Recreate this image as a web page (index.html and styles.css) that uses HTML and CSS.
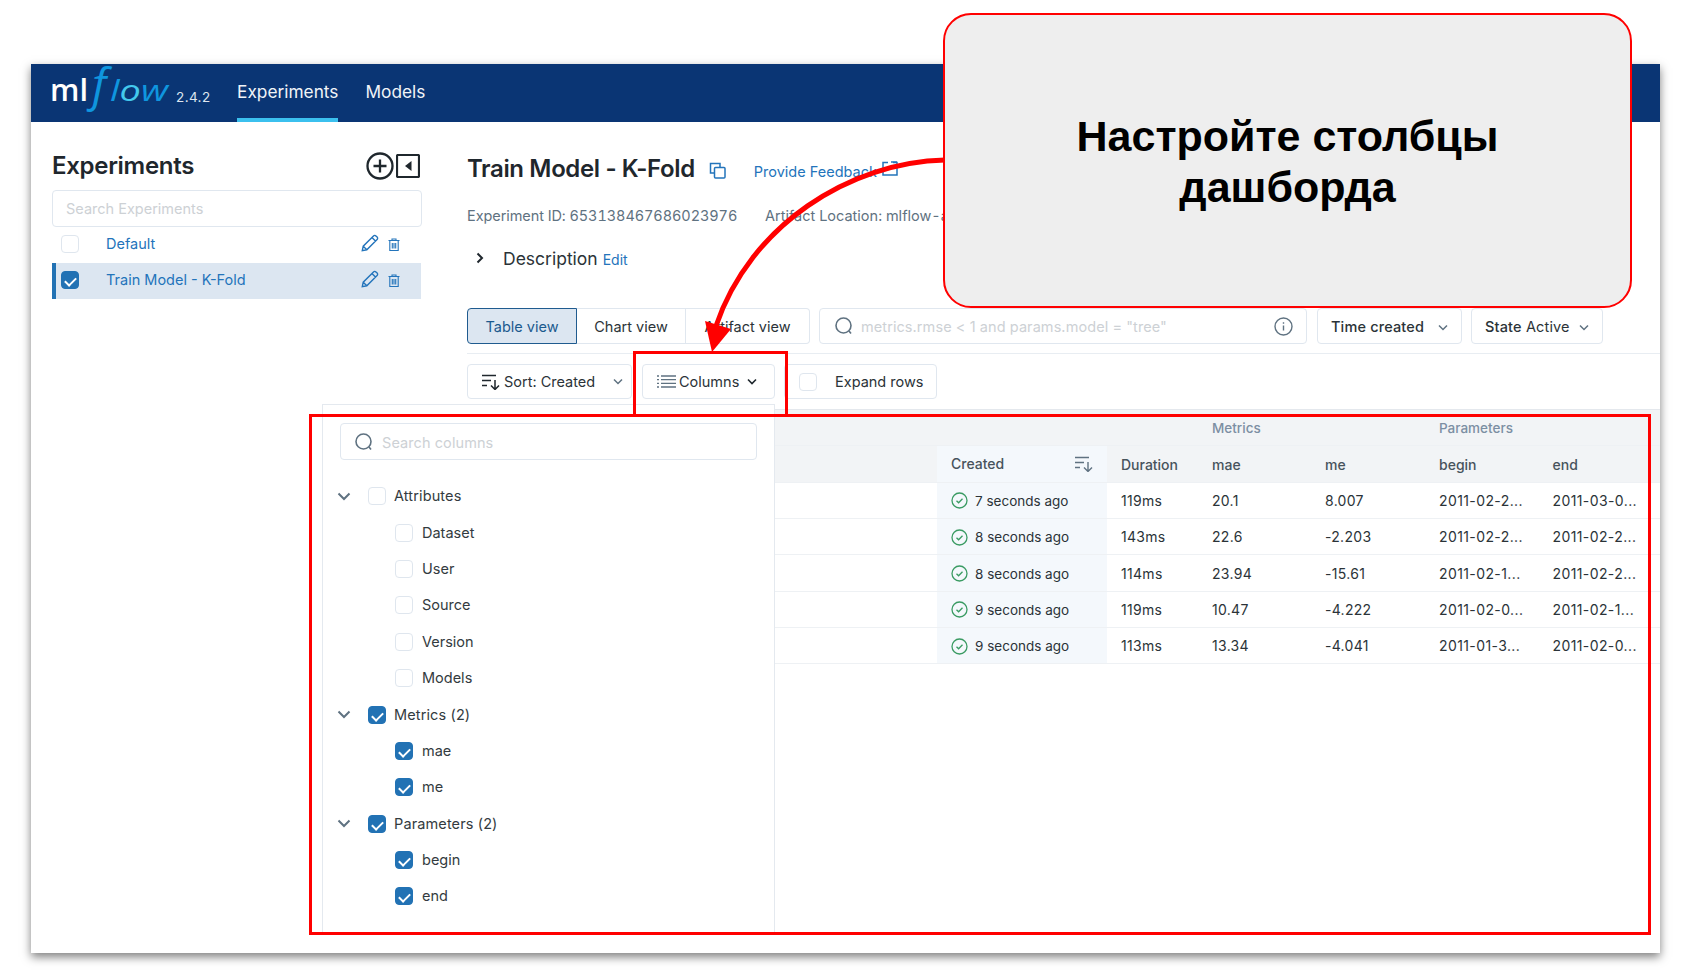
FILE: index.html
```html
<!DOCTYPE html>
<html lang="ru">
<head>
<meta charset="utf-8">
<title>MLflow</title>
<link rel="stylesheet" href="styles.css">
</head>
<body>
<div class="window">
  <header class="nav">
    <svg class="logo" width="122" height="58" viewBox="0 0 122 58">
      <text class="logo-ml" x="0" y="36.500" textLength="38" lengthAdjust="spacingAndGlyphs">ml</text>
      <text class="logo-f" x="42" y="36.500">f</text>
      <text class="logo-low" x="60" y="36.500" textLength="58" lengthAdjust="spacingAndGlyphs">l<tspan class="logo-o">o</tspan>w</text>
    </svg>
    <span class="version">2.4.2</span>
    <a class="nav-link nav-active">Experiments</a>
    <a class="nav-link">Models</a>
  </header>
  <div class="body">
    <aside class="sidebar">
      <div class="side-head">
        <h2 class="side-title">Experiments</h2>
        <div class="side-tools">
          <svg width="28" height="28" viewBox="0 0 28 28" fill="none" stroke="#1f272d" stroke-width="2.300"><circle cx="14" cy="14" r="12.500"/><path d="M14 7.500v13M7.500 14h13"/></svg>
          <svg width="24" height="24" viewBox="0 0 24 24" fill="none" stroke="#1f272d" stroke-width="2.200"><rect x="1" y="1" width="22" height="22" rx="1"/><path d="M15.500 7v10L9 12z" fill="#1f272d" stroke="none"/></svg>
        </div>
      </div>
      <div class="side-search">Search Experiments</div>
      <div class="exp-row">
        <span class="cb"></span><span class="exp-name">Default</span>
        <svg class="pencil" width="18" height="18" viewBox="0 0 17 17" fill="none" stroke="#2374bb" stroke-width="1.300"><path d="M1.200 15.800l.9-4.300L11.800 1.800a1.600 1.600 0 0 1 2.300 0l1.100 1.100a1.600 1.600 0 0 1 0 2.300L5.500 14.900zM2.100 11.500l3.400 3.400M10.300 3.300l3.400 3.400"/></svg>
        <svg class="trash" width="12" height="13" viewBox="0 0 12 13" fill="none" stroke="#2374bb" stroke-width="1.100"><path d="M.5 2.500h11M4 2.500V1h4v1.500M1.800 2.500h8.400v10H1.800zM4.300 5v5.500M6 5v5.500M7.700 5v5.500"/></svg>
      </div>
      <div class="exp-row exp-active">
        <span class="cb cb-on"></span><span class="exp-name">Train Model - K-Fold</span>
        <svg class="pencil" width="18" height="18" viewBox="0 0 17 17" fill="none" stroke="#2374bb" stroke-width="1.300"><path d="M1.200 15.800l.9-4.300L11.800 1.800a1.600 1.600 0 0 1 2.300 0l1.100 1.100a1.600 1.600 0 0 1 0 2.300L5.500 14.900zM2.100 11.500l3.400 3.400M10.300 3.300l3.400 3.400"/></svg>
        <svg class="trash" width="12" height="13" viewBox="0 0 12 13" fill="none" stroke="#2374bb" stroke-width="1.100"><path d="M.5 2.500h11M4 2.500V1h4v1.500M1.800 2.500h8.400v10H1.800zM4.300 5v5.500M6 5v5.500M7.700 5v5.500"/></svg>
      </div>
    </aside>
    <main class="main">
      <div class="title-row">
        <h1 class="title">Train Model - K-Fold</h1>
        <svg class="copy" width="17" height="17" viewBox="0 0 17 17" fill="none" stroke="#2374bb" stroke-width="1.500"><path d="M11 5V1.500H1.500V11H5"/><rect x="5.500" y="5.500" width="10.500" height="10.500" rx="1"/></svg>
        <a class="link feedback">Provide Feedback</a>
        <svg class="ext" width="16" height="15" viewBox="0 0 16 15" fill="none" stroke="#2374bb" stroke-width="1.500"><path d="M6 1.500H1v12.500h14V1.500h-4"/><path d="M9 1h6"/></svg>
      </div>
      <div class="meta-row"><span class="meta-id">Experiment ID: 653138467686023976</span><span>Artifact Location: mlflow-artifacts:/653138467686023976</span></div>
      <div class="desc-row">
        <svg class="desc-chev" width="10" height="12" viewBox="0 0 10 12" fill="none" stroke="#1f272d" stroke-width="2"><path d="M2.500 1.500L7 6l-4.500 4.500"/></svg>
        <span class="desc">Description</span><a class="link edit">Edit</a>
      </div>
      <div class="toolbar">
        <div class="tabs">
          <span class="tab tab-on tab-table">Table view</span>
          <span class="tab tab-chart">Chart view</span>
          <span class="tab tab-art">Artifact view</span>
        </div>
        <div class="run-search">
          <svg width="20" height="20" viewBox="0 0 20 20" fill="none" stroke="#5f7281" stroke-width="1.600"><circle cx="9.500" cy="9.500" r="7.500"/><path d="M15 15l2 2.500"/></svg>
          <span class="ph">metrics.rmse &lt; 1 and params.model = "tree"</span>
          <svg class="info" width="19" height="19" viewBox="0 0 19 19" fill="none" stroke="#5f7281" stroke-width="1.400"><circle cx="9.500" cy="9.500" r="8.500"/><path d="M9.500 8.500v5M9.500 5.200v1.500"/></svg>
        </div>
        <div class="btn btn-time"><b>Time created</b><svg class="chev" width="10" height="7" viewBox="0 0 10 7" fill="none" stroke="#5f7281" stroke-width="1.500"><path d="M1 1.500l4 4 4-4"/></svg></div>
        <div class="btn btn-state"><b>State</b>&nbsp;Active<svg class="chev" width="10" height="7" viewBox="0 0 10 7" fill="none" stroke="#5f7281" stroke-width="1.500"><path d="M1 1.500l4 4 4-4"/></svg></div>
      </div>
      <div class="toolbar2">
        <div class="btn btn-sort">
          <svg width="18" height="16" viewBox="0 0 18 16" fill="none" stroke="#1f272d" stroke-width="1.500"><path d="M0 1.500h14M0 6.500h9M0 11.500h5M13 6v9M9 11.500l4 4 4-4"/></svg>
          <span>Sort: Created</span>
          <svg class="chev" width="10" height="7" viewBox="0 0 10 7" fill="none" stroke="#5f7281" stroke-width="1.500"><path d="M1 1.500l4 4 4-4"/></svg>
        </div>
        <div class="btn btn-cols">
          <svg width="19" height="14" viewBox="0 0 19 14" fill="none" stroke="#5f7281" stroke-width="1.300"><path d="M4 1h15M4 4.700h15M4 8.300h15M4 12h15M0 1h2M0 4.700h2M0 8.300h2M0 12h2"/></svg>
          <span>Columns</span>
          <svg class="chev" width="10" height="7" viewBox="0 0 10 7" fill="none" stroke="#1f272d" stroke-width="1.600"><path d="M1 1.500l4 4 4-4"/></svg>
        </div>
        <div class="btn btn-expand"><span class="cb"></span><span>Expand rows</span></div>
      </div>
      <div class="table">
        <div class="tr th th-group"><span></span><span></span><span></span><span class="group">Metrics</span><span></span><span class="group">Parameters</span><span></span></div>
        <div class="tr th"><span></span><span class="td-created th-created">Created<svg width="18" height="16" viewBox="0 0 18 16" fill="none" stroke="#5f7281" stroke-width="1.400"><path d="M0 1.500h14M0 6.500h9M0 11.500h5M13 6v9M9 11.500l4 4 4-4"/></svg></span><span>Duration</span><span>mae</span><span>me</span><span>begin</span><span>end</span></div>
        <div class="tr"><span></span><span class="td-created"><svg class="ok" width="17" height="17" viewBox="0 0 17 17" fill="none" stroke="#3a9b63" stroke-width="1.300"><circle cx="8.500" cy="8.500" r="7.500"/><path d="M5.500 8.700l2.100 2.100 3.900-4"/></svg>7 seconds ago</span><span>119ms</span><span>20.1</span><span>8.007</span><span>2011-02-2...</span><span>2011-03-0...</span></div>
        <div class="tr"><span></span><span class="td-created"><svg class="ok" width="17" height="17" viewBox="0 0 17 17" fill="none" stroke="#3a9b63" stroke-width="1.300"><circle cx="8.500" cy="8.500" r="7.500"/><path d="M5.500 8.700l2.100 2.100 3.900-4"/></svg>8 seconds ago</span><span>143ms</span><span>22.6</span><span>-2.203</span><span>2011-02-2...</span><span>2011-02-2...</span></div>
        <div class="tr"><span></span><span class="td-created"><svg class="ok" width="17" height="17" viewBox="0 0 17 17" fill="none" stroke="#3a9b63" stroke-width="1.300"><circle cx="8.500" cy="8.500" r="7.500"/><path d="M5.500 8.700l2.100 2.100 3.900-4"/></svg>8 seconds ago</span><span>114ms</span><span>23.94</span><span>-15.61</span><span>2011-02-1...</span><span>2011-02-2...</span></div>
        <div class="tr"><span></span><span class="td-created"><svg class="ok" width="17" height="17" viewBox="0 0 17 17" fill="none" stroke="#3a9b63" stroke-width="1.300"><circle cx="8.500" cy="8.500" r="7.500"/><path d="M5.500 8.700l2.100 2.100 3.900-4"/></svg>9 seconds ago</span><span>119ms</span><span>10.47</span><span>-4.222</span><span>2011-02-0...</span><span>2011-02-1...</span></div>
        <div class="tr"><span></span><span class="td-created"><svg class="ok" width="17" height="17" viewBox="0 0 17 17" fill="none" stroke="#3a9b63" stroke-width="1.300"><circle cx="8.500" cy="8.500" r="7.500"/><path d="M5.500 8.700l2.100 2.100 3.900-4"/></svg>9 seconds ago</span><span>113ms</span><span>13.34</span><span>-4.041</span><span>2011-01-3...</span><span>2011-02-0...</span></div>
      </div>
    </main>
  </div>
  <div class="dropdown">
    <div class="col-search">
      <svg width="20" height="20" viewBox="0 0 20 20" fill="none" stroke="#5f7281" stroke-width="1.600"><circle cx="9.500" cy="9.500" r="7.500"/><path d="M15 15l2 2.500"/></svg>
      <span class="ph">Search columns</span>
    </div>
    <div class="tree">
      <div class="node parent"><svg class="tchev" width="14" height="9" viewBox="0 0 14 9" fill="none" stroke="#5f7281" stroke-width="2"><path d="M1.500 1.500L7 7l5.500-5.500"/></svg><span class="cb"></span><span>Attributes</span></div>
      <div class="node child"><span class="cb"></span><span>Dataset</span></div>
      <div class="node child"><span class="cb"></span><span>User</span></div>
      <div class="node child"><span class="cb"></span><span>Source</span></div>
      <div class="node child"><span class="cb"></span><span>Version</span></div>
      <div class="node child"><span class="cb"></span><span>Models</span></div>
      <div class="node parent"><svg class="tchev" width="14" height="9" viewBox="0 0 14 9" fill="none" stroke="#5f7281" stroke-width="2"><path d="M1.500 1.500L7 7l5.500-5.500"/></svg><span class="cb cb-on"></span><span>Metrics (2)</span></div>
      <div class="node child"><span class="cb cb-on"></span><span>mae</span></div>
      <div class="node child"><span class="cb cb-on"></span><span>me</span></div>
      <div class="node parent"><svg class="tchev" width="14" height="9" viewBox="0 0 14 9" fill="none" stroke="#5f7281" stroke-width="2"><path d="M1.500 1.500L7 7l5.500-5.500"/></svg><span class="cb cb-on"></span><span>Parameters (2)</span></div>
      <div class="node child"><span class="cb cb-on"></span><span>begin</span></div>
      <div class="node child"><span class="cb cb-on"></span><span>end</span></div>
    </div>
  </div>
</div>
<div class="mark mark-cols"></div>
<div class="mark mark-panel"></div>
<svg class="arrow" width="1682" height="974" viewBox="0 0 1682 974" fill="none">
  <path d="M945 160C850 162 750 225 716 326" stroke="#f00" stroke-width="5"/>
  <path d="M705 321L731 329L712 352z" fill="#f00"/>
</svg>
<div class="callout">Настройте столбцы<br>дашборда</div>
</body>
</html>
```
FILE: styles.css
```css
* { box-sizing: border-box; }
html, body { margin: 0; padding: 0; }
body {
  position: relative;
  width: 1682px;
  height: 974px;
  overflow: hidden;
  padding: 64px 0 0 31px;
  background: #fff;
  color: #2b3338;
  font: 14px/20px Inter, "Liberation Sans", sans-serif;
}
h1, h2 { margin: 0; }
a { cursor: pointer; }
svg { display: block; flex: none; }

.window {
  position: relative;
  width: 1629px;
  height: 889px;
  background: #fff;
  box-shadow: 0 4px 9px rgba(0, 0, 0, .5);
}

/* top bar */
.nav {
  display: flex;
  align-items: stretch;
  height: 58px;
  background: #0a3574;
  color: #fff;
  padding-left: 19px;
}
.logo { overflow: visible; }
.logo-ml { font: 600 30px "Open Sans", sans-serif; fill: #fff; }
.logo-f { font: italic 500 46px "Open Sans", sans-serif; fill: #0f96df; }
.logo-low { font: italic 500 29px "Open Sans", sans-serif; fill: #0f96df; }
.logo-o { fill: #43c9ed; }
.version { align-self: flex-end; margin: 0 0 15px 4px; width: 61px; font-size: 13.500px; color: #dfe6ef; letter-spacing: .4px; }
.nav-link { display: flex; align-items: center; font-size: 17.300px; color: #f1f4f8; margin-right: 27px; border-bottom: 4px solid transparent; padding-top: 1px; }
.nav-active { border-bottom-color: #3bc0ee; }

.body { display: flex; height: 831px; }

/* sidebar */
.sidebar { width: 436px; flex: none; padding: 29px 0 0 21px; }
.side-head { display: flex; align-items: center; justify-content: space-between; width: 368px; height: 30px; }
.side-title { font-size: 24px; font-weight: 600; line-height: 30px; color: #1f272d; letter-spacing: -.3px; }
.side-tools { display: flex; align-items: center; gap: 2px; }
.side-search {
  width: 370px; height: 37px; margin-top: 9px; padding: 8px 13px;
  border: 1px solid #e0e7ef; border-radius: 4px;
  color: #cdd1d5; font-size: 14.500px;
}
.exp-row { display: flex; align-items: center; width: 369px; height: 36px; padding: 0 21px 2px 5px; border-left: 4px solid transparent; }
.exp-name { margin-left: 27px; color: #2374bb; font-size: 14.500px; }
.exp-row .pencil { margin: 0 0 3px auto; }
.exp-row .trash { margin-left: 9px; }
.exp-active { background: #dce6f1; border-left-color: #2272b4; }

/* checkbox */
.cb { display: block; flex: none; position: relative; width: 18px; height: 18px; background: #fff; border: 1px solid #dfe6ee; border-radius: 4px; }
.cb-on { background: #2272b4; border-color: #2272b4; }
.cb-on::after {
  content: ""; position: absolute; left: 5px; top: 3px; width: 5px; height: 9px;
  border: solid #fff; border-width: 0 2px 2px 0; transform: rotate(45deg);
}

/* main */
.main { width: 1193px; flex: none; padding-top: 28px; }
.link { color: #2374bb; }
.title-row { display: flex; align-items: center; height: 36px; }
.title { font-size: 24px; font-weight: 600; line-height: 36px; color: #1f272d; letter-spacing: -.37px; padding-top: 1px; }
.copy { margin: 4px 0 0 14px; }
.feedback { margin: 7px 0 0 28px; font-size: 14.500px; }
.ext { margin: 0 0 0 5px; }
.meta-row { display: flex; height: 22px; margin-top: 19px; line-height: 22px; color: #5f7281; font-size: 14.500px; white-space: nowrap; font-variant-numeric: tabular-nums; }
.meta-id { width: 298px; letter-spacing: -.08px; }
.desc-row { display: flex; align-items: center; height: 26px; margin-top: 18px; padding-left: 8px; }
.desc-chev { margin-right: 18px; }
.desc { font-size: 17.500px; color: #2b3338; padding-top: 1px; }
.edit { margin: 3px 0 0 5px; font-size: 14px; }

.toolbar { display: flex; height: 46px; padding-bottom: 9px; margin-top: 37px; border-bottom: 1px solid #e8edf2; white-space: nowrap; }
.tabs { display: flex; width: 343px; }
.tab { display: flex; align-items: center; justify-content: center; padding-top: 2px; border: 1px solid #e0e7ef; font-size: 14.500px; }
.tab-table { width: 110px; border-radius: 4px 0 0 4px; }
.tab-chart { width: 109px; border-left: 0; }
.tab-art { width: 124px; border-left: 0; border-radius: 0 4px 4px 0; }
.tab-on { background: #dce6f1; border-color: #1f5b8f; color: #1b5a8e; }
.run-search { display: flex; align-items: center; width: 488px; margin-left: 9px; padding: 0 13px 0 14px; border: 1px solid #e0e7ef; border-radius: 4px; }
.ph { color: #cdd1d5; font-size: 14.500px; margin-left: 7px; padding-top: 2px; letter-spacing: .08px; }
.info { margin-left: auto; }
.btn { display: flex; align-items: center; border: 1px solid #e0e7ef; border-radius: 4px; font-size: 14.500px; }
.btn b { font-weight: 500; }
.toolbar .btn { padding-top: 2px; letter-spacing: .15px; }
.btn-time { width: 145px; margin-left: 10px; padding-left: 13px; }
.btn-time .chev { margin-left: 14px; }
.btn-state { width: 132px; margin-left: 9px; padding-left: 13px; }
.btn-state .chev { margin-left: 9px; }

.toolbar2 { display: flex; height: 35px; margin-top: 10px; white-space: nowrap; }
.btn-sort { width: 165px; padding-left: 14px; gap: 4px; }
.btn-sort .chev { margin-left: 14px; }
.btn-cols { width: 133px; margin-left: 10px; padding-left: 14px; gap: 3px; }
.btn-cols .chev { margin-left: 5px; }
.btn-expand { width: 153px; margin-left: 9px; padding-left: 14px; gap: 18px; }

/* table */
.table { margin-top: 10px; border-top: 1px solid #e4e8ed; }
.tr {
  display: grid;
  grid-template-columns: 470px 170px 91px 113px 114px 113.500px 1fr;
  align-items: center;
  height: 36.350px;
  border-bottom: 1px solid #eef1f4;
  color: #2b3338;
  white-space: nowrap;
  letter-spacing: .3px;
}
.tr > span { display: flex; align-items: center; height: 100%; padding: 1px 0 0 14px; }
.tr:not(.th) > span:nth-child(n+6) { letter-spacing: .4px; }
.th { background: #f2f4f6; font-weight: 500; color: #47535c; letter-spacing: 0; }
.group { color: #7c8fa3; font-size: 13.500px; }
.td-created { background: #f4f8fc; font-size: 13.500px; letter-spacing: 0; }
.tr > .th-created { justify-content: space-between; padding: 0 14px 0 14px; font-size: 14px; }
.ok { margin-right: 7px; }

/* columns dropdown */
.dropdown {
  position: absolute;
  left: 291px;
  top: 340px;
  width: 453px;
  height: 530px;
  padding: 18px 0 0 17px;
  background: #fff;
  border: 1px solid #e4e9ef;
  border-bottom: 0;
}
.col-search { display: flex; align-items: center; gap: 8px; width: 417px; height: 37px; padding-left: 13px; border: 1px solid #e0e7ef; border-radius: 4px; }
.col-search .ph { margin-left: 0; }
.tree { margin: 18px 0 0 -17px; }
.node { display: flex; align-items: center; height: 36.400px; font-size: 14.500px; color: #333b40; }
.parent { padding-left: 14px; }
.tchev { margin-right: 17px; }
.parent .cb { margin-right: 8px; }
.parent span:last-child { letter-spacing: .12px; }
.child { padding-left: 72px; }
.child .cb { margin-right: 9px; }

/* annotations */
.mark { position: absolute; border: 3px solid #f00; }
.mark-cols { left: 633px; top: 351px; width: 155px; height: 66px; }
.mark-panel { left: 309px; top: 414px; width: 1342px; height: 521px; }
.arrow { position: absolute; left: 0; top: 0; pointer-events: none; }
.callout {
  position: absolute;
  left: 943px;
  top: 13px;
  width: 689px;
  height: 295px;
  padding-top: 96px;
  text-align: center;
  background: #eee;
  border: 2.500px solid #f00;
  border-radius: 28px;
  color: #000;
  font: 700 43px/51px "Liberation Sans", Arial, sans-serif;
}
```
